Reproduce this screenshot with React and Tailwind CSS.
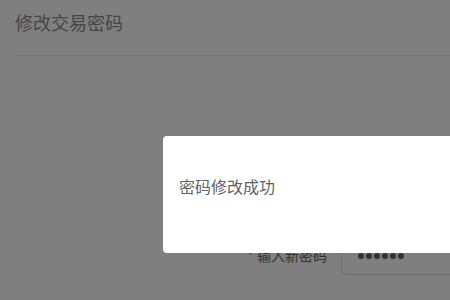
import React from "react";

const App = () => {
	return (
		<div
			className="relative w-[450px] h-[300px] overflow-hidden bg-white"
			style={{ fontFamily: '"Noto Sans CJK SC", "Noto Sans", sans-serif' }}
		>
			<div className="pl-[15px]">
				<div className="h-[56px] flex items-center border-b border-[#eeeeee]">
					<h1 className="text-[18px] text-[#8c8c8c] leading-none -mt-[12px] whitespace-nowrap">修改交易密码</h1>
				</div>
				<div className="mt-[180px] flex items-center">
					<label className="w-[326px] shrink-0 text-right text-[14px] text-[#666666] pr-[14px] whitespace-nowrap">
						<span className="text-[#aaaaaa] mr-[4px] text-[12px]">*</span>
						输入新密码
					</label>
					<div className="w-[200px] shrink-0 h-[39px] border border-[#dddddd] rounded-[4px] flex items-center gap-[2px] pl-[16px]">
						{[0, 1, 2, 3, 4, 5].map((i) => (
							<span key={i} className="w-[6px] h-[6px] rounded-full bg-[#666666]" />
						))}
					</div>
				</div>
			</div>

			<div className="absolute inset-0 bg-black/50" />

			<div className="absolute left-[163px] top-[136px] w-[320px] h-[117px] bg-white rounded-[4px] px-[16px] pt-[38px]">
				<p className="text-[16px] text-[#606266] leading-[24px] whitespace-nowrap">密码修改成功</p>
			</div>
		</div>
	);
};

export default App;
